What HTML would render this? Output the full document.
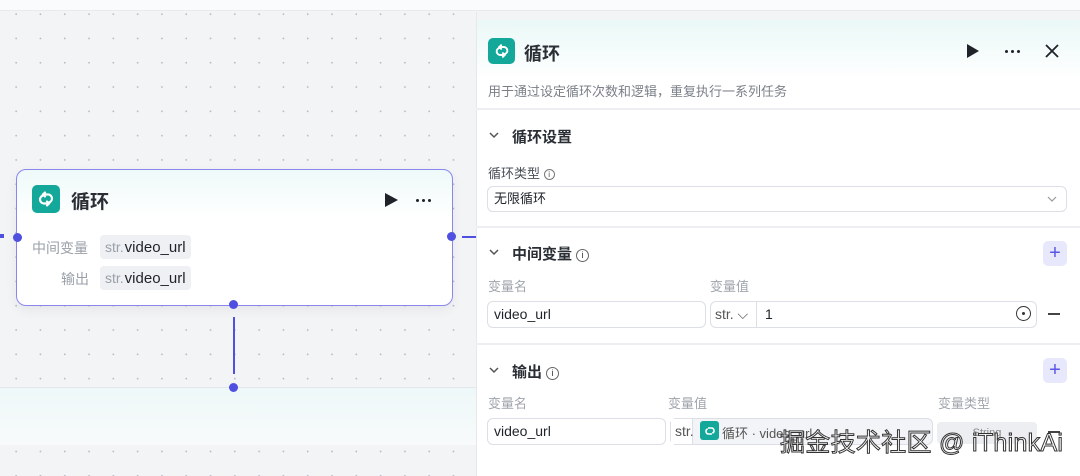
<!DOCTYPE html>
<html><head><meta charset="utf-8"><style>
*{box-sizing:border-box;margin:0;padding:0}
body{width:1080px;height:476px;overflow:hidden;position:relative;font-family:"Liberation Sans","Noto Sans CJK SC",sans-serif;background:#f3f4f6;color:#1f2329}
.dots{position:absolute;background-color:#f3f4f6;background-image:radial-gradient(circle,#b8bcc4 0.8px,transparent 1.1px);background-size:24.3px 24.3px;background-position:4px 2px}
.abs{position:absolute}
.ico{position:absolute;background:#14a89a;border-radius:5px;display:flex;align-items:center;justify-content:center}
.tag{position:absolute;background:#eff0f4;border-radius:4px;height:24px;padding:0 5px;font-size:15px;line-height:24px;color:#1f2329}
.tag i{font-style:normal;color:#9aa0a8;font-size:14px;margin-right:1px}
.lbl{position:absolute;font-size:14px;color:#9aa0a8}
.hd{position:absolute;width:9px;height:9px;border-radius:50%;background:#4f4fe0}
.inp{position:absolute;border:1px solid #dcdfe5;border-radius:6px;background:#fff;height:27px;font-size:14px;line-height:25px;padding-left:6px;color:#1f2329}
.sec{position:absolute;font-size:15px;font-weight:bold;color:#2a2e35}
.div{position:absolute;left:476px;width:604px;height:2px;background:#eceef2}
.plus{position:absolute;width:24px;height:25px;border-radius:5px;background:#e7e8fb;color:#5a55e6;font-size:20px;line-height:24px;text-align:center}
.sl{position:absolute;font-size:13px;color:#a0a5ad}
.dd{position:absolute;display:flex;gap:3px}
.dd b{width:3px;height:3px;border-radius:50%;background:#1f2329}
</style></head><body>
<div class="dots" style="left:0;top:0;width:476px;height:476px"></div>
<div class="abs" style="left:0;top:0;width:1080px;height:11px;background:#fafbfc;border-bottom:1px solid #e8eaee"></div>
<div class="abs" style="left:0;top:387px;width:476px;height:58px;background:linear-gradient(#eef8f8,#f8fafb);border-top:1px solid #e3e6ea"></div>
<!-- node -->
<div class="abs" style="left:16px;top:169px;width:437px;height:137px;border:1.5px solid #8a86ee;border-radius:10px;background:linear-gradient(#eef9f9,#fff 35%);box-shadow:0 4px 12px rgba(0,0,0,.06)"></div>
<div class="ico" style="left:32px;top:185px;width:28px;height:28px"><svg width="18" height="18" viewBox="0 0 18 18" fill="none" stroke="#fff" stroke-width="2.2" stroke-linecap="round"><path d="M6 4.5H11a4 4 0 0 1 1.5 7.7M12 13.5H7a4 4 0 0 1-1.5-7.7"/><path d="M8 2.5l-2 2 2 2M10 11.5l2 2-2 2"/></svg></div>
<div class="abs" style="left:71px;top:187px;font-size:19px;font-weight:bold;color:#2a2e35">循环</div>
<div class="abs" style="left:385px;top:193px;width:0;height:0;border-left:13px solid #1f2329;border-top:7.5px solid transparent;border-bottom:7.5px solid transparent"></div>
<div class="dd" style="left:416px;top:199px"><b></b><b></b><b></b></div>
<div class="lbl" style="left:32px;top:238px">中间变量</div>
<div class="lbl" style="left:61px;top:269px">输出</div>
<div class="tag" style="left:100px;top:235px"><i>str.</i>video_url</div>
<div class="tag" style="left:100px;top:266px"><i>str.</i>video_url</div>
<div class="hd" style="left:13px;top:233px"></div>
<div class="hd" style="left:447px;top:232px"></div>
<div class="abs" style="left:0;top:234px;width:4px;height:4px;background:#4f4fe0"></div>
<div class="abs" style="left:462px;top:236px;width:14px;height:2px;background:#4f4fe0"></div>
<div class="hd" style="left:229px;top:300px"></div>
<div class="abs" style="left:233px;top:317px;width:2px;height:57px;background:#4f4fe0"></div>
<div class="hd" style="left:229px;top:383px"></div>
<!-- panel -->
<div class="abs" style="left:476px;top:12px;width:604px;height:464px;background:#fff;border-left:1px solid #e6e8ec"></div>
<div class="dots" style="left:477px;top:12px;width:603px;height:8px;background-position:8px -3px"></div>
<div class="abs" style="left:477px;top:20px;width:603px;height:60px;background:linear-gradient(#eaf8f7,#fff)"></div>
<div class="ico" style="left:488px;top:38px;width:27px;height:26px"><svg width="16" height="16" viewBox="0 0 18 18" fill="none" stroke="#fff" stroke-width="2.2" stroke-linecap="round"><path d="M6 4.5H11a4 4 0 0 1 1.5 7.7M12 13.5H7a4 4 0 0 1-1.5-7.7"/><path d="M8 2.5l-2 2 2 2M10 11.5l2 2-2 2"/></svg></div>
<div class="abs" style="left:524px;top:40px;font-size:18px;font-weight:bold;color:#2a2e35">循环</div>
<div class="abs" style="left:967px;top:44px;width:0;height:0;border-left:12px solid #1f2329;border-top:7px solid transparent;border-bottom:7px solid transparent"></div>
<div class="dd" style="left:1005px;top:50px"><b></b><b></b><b></b></div>
<svg class="abs" style="left:1045px;top:44px" width="14" height="14" viewBox="0 0 14 14" stroke="#1f2329" stroke-width="1.8"><path d="M1 1L13 13M13 1L1 13"/></svg>
<div class="abs" style="left:488px;top:81px;font-size:13px;color:#7a7f87">用于通过设定循环次数和逻辑，重复执行一系列任务</div>
<div class="div" style="top:108px"></div>
<svg class="abs" style="left:489px;top:132px" width="10" height="7" viewBox="0 0 10 7" fill="none" stroke="#555" stroke-width="1.5"><path d="M1 1l4 4 4-4"/></svg>
<div class="sec" style="left:512px;top:126px">循环设置</div>
<div class="abs" style="left:488px;top:163px;font-size:13px;color:#4a4f57">循环类型 <span style="display:inline-block;width:11px;height:11px;border:1px solid #777;border-radius:50%;font-size:8px;line-height:9px;text-align:center;vertical-align:1px">i</span></div>
<div class="inp" style="left:487px;top:186px;width:580px;height:26px;font-size:13px;line-height:24px">无限循环</div>
<svg class="abs" style="left:1047px;top:196px" width="10" height="6" viewBox="0 0 10 6" fill="none" stroke="#999" stroke-width="1.2"><path d="M1 1l4 4 4-4"/></svg>
<div class="div" style="top:226px"></div>
<svg class="abs" style="left:489px;top:249px" width="10" height="7" viewBox="0 0 10 7" fill="none" stroke="#555" stroke-width="1.5"><path d="M1 1l4 4 4-4"/></svg>
<div class="sec" style="left:512px;top:243px">中间变量 <span style="display:inline-block;width:13px;height:13px;border:1px solid #666;border-radius:50%;font-size:9px;line-height:11px;text-align:center;font-weight:normal;vertical-align:1px">i</span></div>
<div class="plus" style="left:1043px;top:241px">+</div>
<div class="sl" style="left:488px;top:276px">变量名</div>
<div class="sl" style="left:710px;top:276px">变量值</div>
<div class="inp" style="left:487px;top:301px;width:219px">video_url</div>
<div class="inp" style="left:710px;top:301px;width:327px;padding-left:0"><span style="display:inline-block;width:46px;border-right:1px solid #dcdfe5;padding-left:4px;color:#555">str. ⌵</span><span style="padding-left:8px">1</span></div>
<div class="abs" style="left:1016px;top:306px;width:15px;height:15px;border:1.5px solid #333;border-radius:50%"><div class="abs" style="left:4.5px;top:4.5px;width:3px;height:3px;border-radius:50%;background:#333"></div></div>
<div class="abs" style="left:1048px;top:313px;width:12px;height:1.5px;background:#444"></div>
<div class="div" style="top:343px"></div>
<svg class="abs" style="left:489px;top:367px" width="10" height="7" viewBox="0 0 10 7" fill="none" stroke="#555" stroke-width="1.5"><path d="M1 1l4 4 4-4"/></svg>
<div class="sec" style="left:512px;top:361px">输出 <span style="display:inline-block;width:13px;height:13px;border:1px solid #666;border-radius:50%;font-size:9px;line-height:11px;text-align:center;font-weight:normal;vertical-align:1px">i</span></div>
<div class="plus" style="left:1043px;top:358px">+</div>
<div class="sl" style="left:488px;top:393px">变量名</div>
<div class="sl" style="left:668px;top:393px">变量值</div>
<div class="sl" style="left:938px;top:393px">变量类型</div>
<div class="inp" style="left:487px;top:418px;width:179px">video_url</div>
<div class="inp" style="left:670px;top:418px;width:263px;padding-left:0;background:#f3f4f7"><span style="display:inline-block;width:22px;background:#fff;padding-left:4px;height:25px;border-right:1px solid #dcdfe5;color:#555">str.</span></div>
<div class="ico" style="left:700px;top:421px;width:19px;height:19px;border-radius:3px"><svg width="12" height="12" viewBox="0 0 18 18" fill="none" stroke="#fff" stroke-width="2.4"><path d="M6 4.5H11a4 4 0 0 1 1.5 7.7M12 13.5H7a4 4 0 0 1-1.5-7.7"/></svg></div>
<div class="abs" style="left:722px;top:423px;font-size:13px;color:#555">循环 · video_url</div>
<div class="abs" style="left:937px;top:422px;width:100px;height:22px;background:#eceef2;border-radius:4px;font-size:11px;color:#888;text-align:center;line-height:22px">String</div>
<div class="abs" style="left:1048px;top:431px;width:12px;height:1.5px;background:#444"></div>
<div class="abs" style="left:780px;top:423px;font-size:25px;color:#fff;-webkit-text-stroke:1px #333;white-space:nowrap;letter-spacing:0.3px">掘金技术社区 @ iThinkAi</div>
</body></html>
